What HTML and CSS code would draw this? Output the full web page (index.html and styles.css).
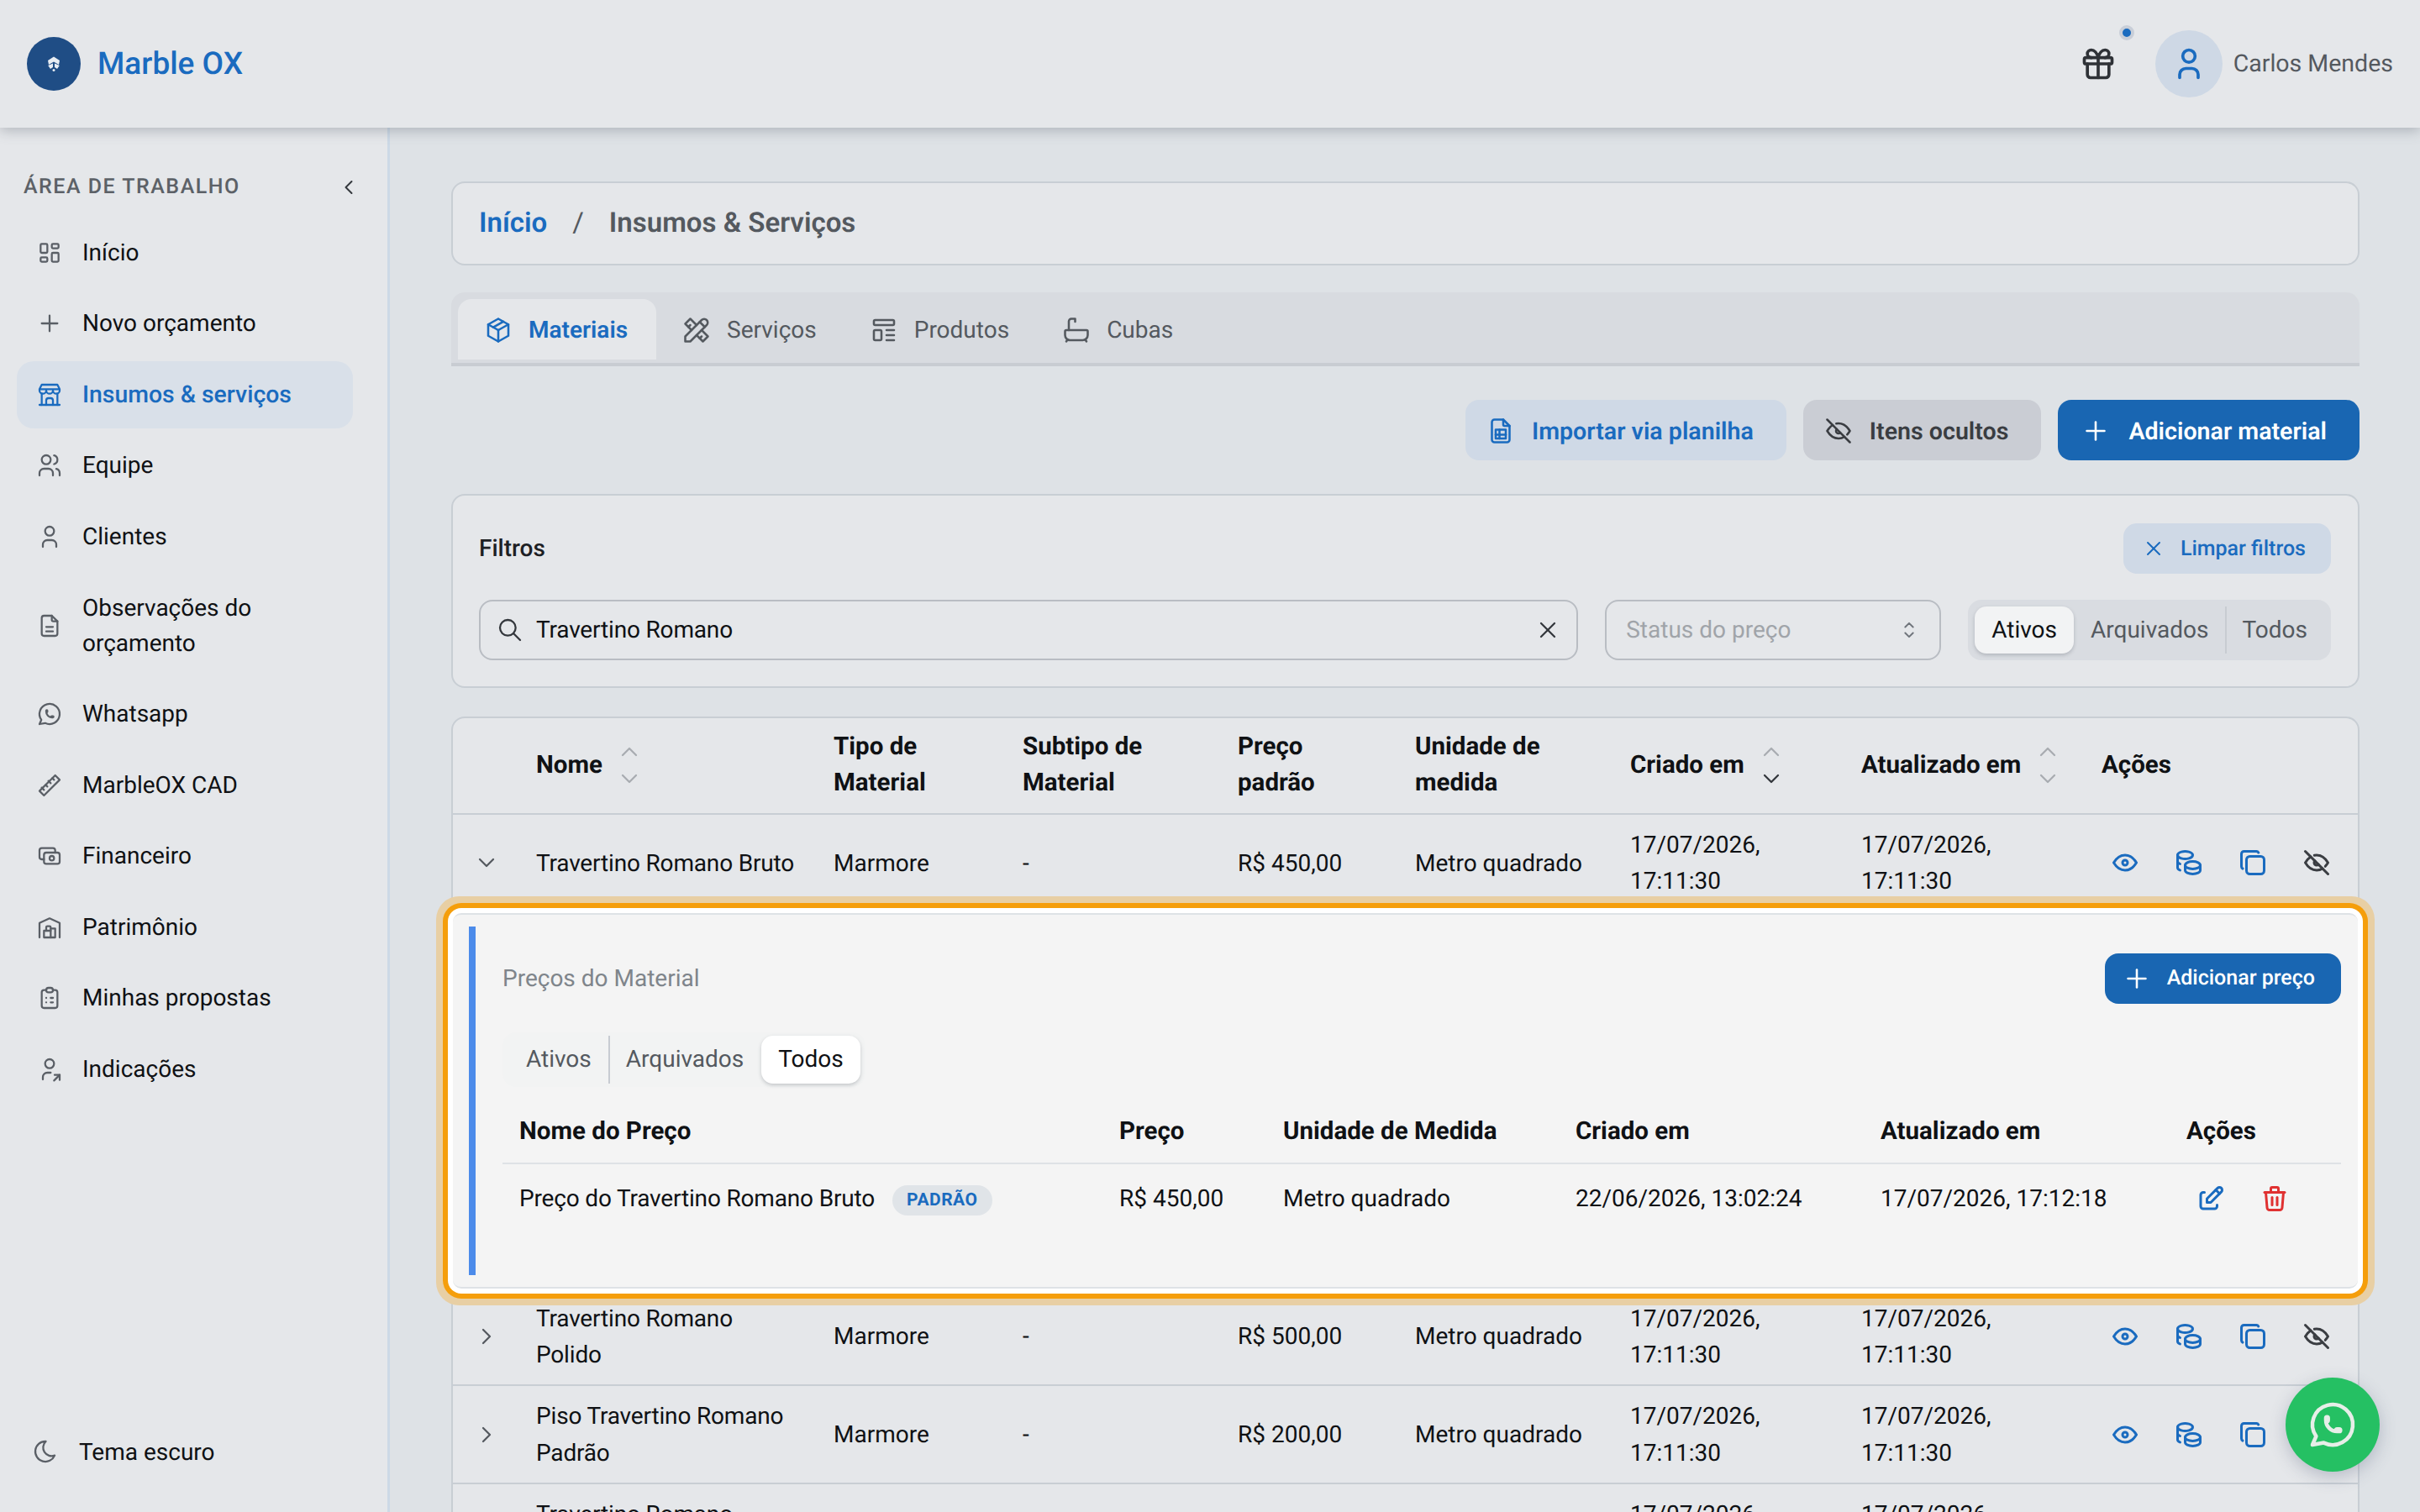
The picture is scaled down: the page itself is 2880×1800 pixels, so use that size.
FILE: index.html
```html
<!DOCTYPE html>
<html lang="pt-BR">
<head>
  <meta charset="UTF-8">
  <title>Marble OX - Insumos &amp; Serviços</title>
  <link rel="stylesheet" href="styles.css">
</head>
<body>

  <!-- Icon sprite -->
  <svg class="sprite" xmlns="http://www.w3.org/2000/svg">
    <symbol id="i-dashboard" viewBox="0 0 24 24"><path d="M5 4h4a1 1 0 0 1 1 1v6a1 1 0 0 1 -1 1h-4a1 1 0 0 1 -1 -1v-6a1 1 0 0 1 1 -1"/><path d="M5 16h4a1 1 0 0 1 1 1v2a1 1 0 0 1 -1 1h-4a1 1 0 0 1 -1 -1v-2a1 1 0 0 1 1 -1"/><path d="M15 12h4a1 1 0 0 1 1 1v6a1 1 0 0 1 -1 1h-4a1 1 0 0 1 -1 -1v-6a1 1 0 0 1 1 -1"/><path d="M15 4h4a1 1 0 0 1 1 1v2a1 1 0 0 1 -1 1h-4a1 1 0 0 1 -1 -1v-2a1 1 0 0 1 1 -1"/></symbol>
    <symbol id="i-plus" viewBox="0 0 24 24"><path d="M12 5v14"/><path d="M5 12h14"/></symbol>
    <symbol id="i-store" viewBox="0 0 24 24"><path d="M3 21l18 0"/><path d="M3 7v1a3 3 0 0 0 6 0v-1m0 1a3 3 0 0 0 6 0v-1m0 1a3 3 0 0 0 6 0v-1h-18l2 -4h14l2 4"/><path d="M5 21l0 -10.15"/><path d="M19 21l0 -10.15"/><path d="M9 21v-4a2 2 0 0 1 2 -2h2a2 2 0 0 1 2 2v4"/></symbol>
    <symbol id="i-users" viewBox="0 0 24 24"><path d="M5 7a4 4 0 1 0 8 0a4 4 0 1 0 -8 0"/><path d="M3 21v-2a4 4 0 0 1 4 -4h4a4 4 0 0 1 4 4v2"/><path d="M16 3.13a4 4 0 0 1 0 7.75"/><path d="M21 21v-2a4 4 0 0 0 -3 -3.85"/></symbol>
    <symbol id="i-user" viewBox="0 0 24 24"><path d="M8 7a4 4 0 1 0 8 0a4 4 0 0 0 -8 0"/><path d="M6 21v-2a4 4 0 0 1 4 -4h4a4 4 0 0 1 4 4v2"/></symbol>
    <symbol id="i-file" viewBox="0 0 24 24"><path d="M14 3v4a1 1 0 0 0 1 1h4"/><path d="M17 21h-10a2 2 0 0 1 -2 -2v-14a2 2 0 0 1 2 -2h7l5 5v11a2 2 0 0 1 -2 2z"/><path d="M9 17h6"/><path d="M9 13h6"/></symbol>
    <symbol id="i-whatsapp" viewBox="0 0 24 24"><path d="M3 21l1.65 -3.8a9 9 0 1 1 3.4 2.9l-5.05 .9"/><path d="M9 10a.5 .5 0 0 0 1 0v-1a.5 .5 0 0 0 -1 0v1a5 5 0 0 0 5 5h1a.5 .5 0 0 0 0 -1h-1a.5 .5 0 0 0 0 1"/></symbol>
    <symbol id="i-ruler" viewBox="0 0 24 24"><path d="M17 3l4 4l-14 14l-4 -4z"/><path d="M16 7l-1.5 -1.5"/><path d="M13 10l-2 -2"/><path d="M10 13l-1.5 -1.5"/><path d="M7 16l-2 -2"/></symbol>
    <symbol id="i-cash" viewBox="0 0 24 24"><path d="M7 11a2 2 0 0 1 2 -2h10a2 2 0 0 1 2 2v6a2 2 0 0 1 -2 2h-10a2 2 0 0 1 -2 -2z"/><path d="M12 14a2 2 0 1 0 4 0a2 2 0 0 0 -4 0"/><path d="M17 9v-2a2 2 0 0 0 -2 -2h-10a2 2 0 0 0 -2 2v6a2 2 0 0 0 2 2h2"/></symbol>
    <symbol id="i-warehouse" viewBox="0 0 24 24"><path d="M3 21v-13l9 -4l9 4v13"/><path d="M13 13h4v8h-10v-6h6"/><path d="M13 21v-9a1 1 0 0 0 -1 -1h-2a1 1 0 0 0 -1 1v3"/></symbol>
    <symbol id="i-clipboard" viewBox="0 0 24 24"><path d="M9 5h-2a2 2 0 0 0 -2 2v12a2 2 0 0 0 2 2h10a2 2 0 0 0 2 -2v-12a2 2 0 0 0 -2 -2h-2"/><path d="M9 5a2 2 0 0 1 2 -2h2a2 2 0 0 1 2 2v0a2 2 0 0 1 -2 2h-2a2 2 0 0 1 -2 -2z"/><path d="M9 12l.01 0"/><path d="M13 12l2 0"/><path d="M9 16l.01 0"/><path d="M13 16l2 0"/></symbol>
    <symbol id="i-user-share" viewBox="0 0 24 24"><path d="M8 7a4 4 0 1 0 8 0a4 4 0 0 0 -8 0"/><path d="M6 21v-2a4 4 0 0 1 4 -4h3"/><path d="M16 22l5 -5"/><path d="M21 21.5v-4.5h-4.5"/></symbol>
    <symbol id="i-moon" viewBox="0 0 24 24"><path d="M12 3c.132 0 .263 0 .393 0a7.5 7.5 0 0 0 7.92 12.446a9 9 0 1 1 -8.313 -12.454z"/></symbol>
    <symbol id="i-left" viewBox="0 0 24 24"><path d="M15 6l-6 6l6 6"/></symbol>
    <symbol id="i-right" viewBox="0 0 24 24"><path d="M9 6l6 6l-6 6"/></symbol>
    <symbol id="i-down" viewBox="0 0 24 24"><path d="M6 9l6 6l6 -6"/></symbol>
    <symbol id="i-up" viewBox="0 0 24 24"><path d="M6 15l6 -6l6 6"/></symbol>
    <symbol id="i-gift" viewBox="0 0 24 24"><path d="M3 9a1 1 0 0 1 1 -1h16a1 1 0 0 1 1 1v2a1 1 0 0 1 -1 1h-16a1 1 0 0 1 -1 -1z"/><path d="M12 8l0 13"/><path d="M19 12v7a2 2 0 0 1 -2 2h-10a2 2 0 0 1 -2 -2v-7"/><path d="M7.5 8a2.5 2.5 0 0 1 0 -5a4.8 8 0 0 1 4.5 5a4.8 8 0 0 1 4.5 -5a2.5 2.5 0 0 1 0 5"/></symbol>
    <symbol id="i-package" viewBox="0 0 24 24"><path d="M12 3l8 4.5l0 9l-8 4.5l-8 -4.5l0 -9l8 -4.5"/><path d="M12 12l8 -4.5"/><path d="M12 12l0 9"/><path d="M12 12l-8 -4.5"/><path d="M16 5.25l-8 4.5"/></symbol>
    <symbol id="i-tools" viewBox="0 0 24 24"><path d="M3 21h4l13 -13a1.5 1.5 0 0 0 -4 -4l-13 13v4"/><path d="M14.5 5.5l4 4"/><path d="M12 8l-5 -5l-4 4l5 5"/><path d="M7 8l-1.5 1.5"/><path d="M16 12l5 5l-4 4l-5 -5"/><path d="M16 17l-1.5 1.5"/></symbol>
    <symbol id="i-template" viewBox="0 0 24 24"><path d="M4 5a1 1 0 0 1 1 -1h14a1 1 0 0 1 1 1v2a1 1 0 0 1 -1 1h-14a1 1 0 0 1 -1 -1z"/><path d="M4 13a1 1 0 0 1 1 -1h4a1 1 0 0 1 1 1v6a1 1 0 0 1 -1 1h-4a1 1 0 0 1 -1 -1z"/><path d="M14 12l6 0"/><path d="M14 16l6 0"/><path d="M14 20l6 0"/></symbol>
    <symbol id="i-bath" viewBox="0 0 24 24"><path d="M4 12h16a1 1 0 0 1 1 1v3a4 4 0 0 1 -4 4h-10a4 4 0 0 1 -4 -4v-3a1 1 0 0 1 1 -1z"/><path d="M6 12v-7a2 2 0 0 1 2 -2h3v2.25"/><path d="M4 21l1 -1.5"/><path d="M20 21l-1 -1.5"/></symbol>
    <symbol id="i-sheet" viewBox="0 0 24 24"><path d="M14 3v4a1 1 0 0 0 1 1h4"/><path d="M17 21h-10a2 2 0 0 1 -2 -2v-14a2 2 0 0 1 2 -2h7l5 5v11a2 2 0 0 1 -2 2z"/><path d="M8 11h8v7h-8z"/><path d="M8 15h8"/><path d="M11 11v7"/></symbol>
    <symbol id="i-eye-off" viewBox="0 0 24 24"><path d="M10.585 10.587a2 2 0 0 0 2.829 2.828"/><path d="M16.681 16.673a8.717 8.717 0 0 1 -4.681 1.327c-3.6 0 -6.6 -2 -9 -6c1.272 -2.12 2.712 -3.678 4.32 -4.674m2.86 -1.146a9.055 9.055 0 0 1 1.82 -.18c3.6 0 6.6 2 9 6c-.666 1.11 -1.379 2.067 -2.138 2.87"/><path d="M3 3l18 18"/></symbol>
    <symbol id="i-eye" viewBox="0 0 24 24"><path d="M10 12a2 2 0 1 0 4 0a2 2 0 0 0 -4 0"/><path d="M21 12c-2.4 4 -5.4 6 -9 6c-3.6 0 -6.6 -2 -9 -6c2.4 -4 5.4 -6 9 -6c3.6 0 6.6 2 9 6"/></symbol>
    <symbol id="i-coins" viewBox="0 0 24 24"><path d="M9 14c0 1.657 2.686 3 6 3s6 -1.343 6 -3s-2.686 -3 -6 -3s-6 1.343 -6 3z"/><path d="M9 14v4c0 1.656 2.686 3 6 3s6 -1.344 6 -3v-4"/><path d="M3 6c0 1.072 1.144 2.062 3 2.598s4.144 .536 6 0c1.856 -.536 3 -1.526 3 -2.598c0 -1.072 -1.144 -2.062 -3 -2.598s-4.144 -.536 -6 0c-1.856 .536 -3 1.526 -3 2.598z"/><path d="M3 6v10c0 .888 .772 1.45 2 2"/><path d="M3 11c0 .888 .772 1.45 2 2"/></symbol>
    <symbol id="i-copy" viewBox="0 0 24 24"><path d="M7 9.667a2.667 2.667 0 0 1 2.667 -2.667h8.666a2.667 2.667 0 0 1 2.667 2.667v8.666a2.667 2.667 0 0 1 -2.667 2.667h-8.666a2.667 2.667 0 0 1 -2.667 -2.667z"/><path d="M4.012 16.737a2.005 2.005 0 0 1 -1.012 -1.737v-10c0 -1.1 .9 -2 2 -2h10c.75 0 1.158 .385 1.5 1"/></symbol>
    <symbol id="i-edit" viewBox="0 0 24 24"><path d="M7 7h-1a2 2 0 0 0 -2 2v9a2 2 0 0 0 2 2h9a2 2 0 0 0 2 -2v-1"/><path d="M20.385 6.585a2.1 2.1 0 0 0 -2.97 -2.97l-8.415 8.385v3h3l8.385 -8.415z"/><path d="M16 5l3 3"/></symbol>
    <symbol id="i-trash" viewBox="0 0 24 24"><path d="M4 7l16 0"/><path d="M10 11l0 6"/><path d="M14 11l0 6"/><path d="M5 7l1 12a2 2 0 0 0 2 2h8a2 2 0 0 0 2 -2l1 -12"/><path d="M9 7v-3a1 1 0 0 1 1 -1h4a1 1 0 0 1 1 1v3"/></symbol>
    <symbol id="i-search" viewBox="0 0 24 24"><path d="M3 10a7 7 0 1 0 14 0a7 7 0 1 0 -14 0"/><path d="M21 21l-6 -6"/></symbol>
    <symbol id="i-x" viewBox="0 0 24 24"><path d="M18 6l-12 12"/><path d="M6 6l12 12"/></symbol>
    <symbol id="i-selector" viewBox="0 0 24 24"><path d="M8 9l4 -4l4 4"/><path d="M16 15l-4 4l-4 -4"/></symbol>
  </svg>

  <header class="topbar">
    <div class="brand">
      <span class="brand-logo">
        <svg viewBox="0 0 20 20" width="20" height="20"><path d="M10 1.5l7 4.5-1 5-6-3.5-6 3.5-1-5z" fill="#e8edf3"/><path d="M3.2 12l5.8-2.6v4.6l-3 2zM16.8 12l-5.8-2.6v4.6l3 2z" fill="#e8edf3"/><circle cx="10" cy="17.6" r="1.5" fill="#e8edf3"/></svg>
      </span>
      <span class="brand-name">Marble OX</span>
    </div>
    <div class="topbar-right">
      <span class="gift">
        <svg class="icon icon-44"><use href="#i-gift"/></svg>
        <span class="gift-dot"></span>
      </span>
      <span class="avatar"><svg class="icon icon-44"><use href="#i-user"/></svg></span>
      <span class="user-name">Carlos Mendes</span>
    </div>
  </header>

  <div class="app">
    <aside class="sidebar">
      <div class="side-title">
        <span>ÁREA DE TRABALHO</span>
        <svg class="icon icon-28"><use href="#i-left"/></svg>
      </div>
      <nav class="side-nav">
        <a class="side-item"><svg class="icon"><use href="#i-dashboard"/></svg><span>Início</span></a>
        <a class="side-item"><svg class="icon"><use href="#i-plus"/></svg><span>Novo orçamento</span></a>
        <a class="side-item active"><svg class="icon"><use href="#i-store"/></svg><span>Insumos &amp; serviços</span></a>
        <a class="side-item"><svg class="icon"><use href="#i-users"/></svg><span>Equipe</span></a>
        <a class="side-item"><svg class="icon"><use href="#i-user"/></svg><span>Clientes</span></a>
        <a class="side-item"><svg class="icon"><use href="#i-file"/></svg><span>Observações do orçamento</span></a>
        <a class="side-item"><svg class="icon"><use href="#i-whatsapp"/></svg><span>Whatsapp</span></a>
        <a class="side-item"><svg class="icon"><use href="#i-ruler"/></svg><span>MarbleOX CAD</span></a>
        <a class="side-item"><svg class="icon"><use href="#i-cash"/></svg><span>Financeiro</span></a>
        <a class="side-item"><svg class="icon"><use href="#i-warehouse"/></svg><span>Patrimônio</span></a>
        <a class="side-item"><svg class="icon"><use href="#i-clipboard"/></svg><span>Minhas propostas</span></a>
        <a class="side-item"><svg class="icon"><use href="#i-user-share"/></svg><span>Indicações</span></a>
      </nav>
      <a class="side-theme"><svg class="icon"><use href="#i-moon"/></svg><span>Tema escuro</span></a>
    </aside>

    <main class="content">
      <div class="breadcrumb">
        <a class="crumb-link">Início</a>
        <span class="crumb-sep">/</span>
        <span class="crumb-current">Insumos &amp; Serviços</span>
      </div>

      <div class="tabs">
        <a class="tab active"><svg class="icon icon-36"><use href="#i-package"/></svg>Materiais</a>
        <a class="tab"><svg class="icon icon-36"><use href="#i-tools"/></svg>Serviços</a>
        <a class="tab"><svg class="icon icon-36"><use href="#i-template"/></svg>Produtos</a>
        <a class="tab"><svg class="icon icon-36"><use href="#i-bath"/></svg>Cubas</a>
      </div>

      <div class="toolbar">
        <button class="btn btn-light"><svg class="icon icon-36"><use href="#i-sheet"/></svg>Importar via planilha</button>
        <button class="btn btn-gray"><svg class="icon icon-36"><use href="#i-eye-off"/></svg>Itens ocultos</button>
        <button class="btn btn-primary"><svg class="icon icon-36"><use href="#i-plus"/></svg>Adicionar material</button>
      </div>

      <section class="filters">
        <div class="filters-head">
          <span>Filtros</span>
          <button class="btn btn-light btn-sm"><svg class="icon icon-28"><use href="#i-x"/></svg>Limpar filtros</button>
        </div>
        <div class="filters-row">
          <div class="field field-search">
            <svg class="icon icon-32 field-search-icon"><use href="#i-search"/></svg>
            <span class="field-value">Travertino Romano</span>
            <svg class="icon icon-32"><use href="#i-x"/></svg>
          </div>
          <div class="field field-select">
            <span class="field-placeholder">Status do preço</span>
            <svg class="icon icon-28"><use href="#i-selector"/></svg>
          </div>
          <div class="segment">
            <span class="seg-item active">Ativos</span>
            <span class="seg-item">Arquivados</span>
            <span class="seg-item seg-split">Todos</span>
          </div>
        </div>
      </section>

      <section class="table-card">
        <table class="materials">
          <colgroup>
            <col class="c-toggle"><col class="c-name"><col class="c-type"><col class="c-sub"><col class="c-price">
            <col class="c-unit"><col class="c-created"><col class="c-updated"><col class="c-actions">
          </colgroup>
          <thead>
            <tr>
              <th></th>
              <th><span class="th-sort">Nome<span class="sort"><svg class="icon icon-32"><use href="#i-up"/></svg><svg class="icon icon-32"><use href="#i-down"/></svg></span></span></th>
              <th>Tipo de Material</th>
              <th>Subtipo de Material</th>
              <th>Preço padrão</th>
              <th>Unidade de medida</th>
              <th><span class="th-sort">Criado em<span class="sort"><svg class="icon icon-32"><use href="#i-up"/></svg><svg class="icon icon-32 on"><use href="#i-down"/></svg></span></span></th>
              <th><span class="th-sort">Atualizado em<span class="sort"><svg class="icon icon-32"><use href="#i-up"/></svg><svg class="icon icon-32"><use href="#i-down"/></svg></span></span></th>
              <th>Ações</th>
            </tr>
          </thead>
          <tbody>
            <tr>
              <td class="toggle"><svg class="icon icon-32"><use href="#i-down"/></svg></td>
              <td class="name">Travertino Romano Bruto</td>
              <td>Marmore</td>
              <td>-</td>
              <td>R$ 450,00</td>
              <td>Metro quadrado</td>
              <td>17/07/2026, 17:11:30</td>
              <td>17/07/2026, 17:11:30</td>
              <td>
                <div class="row-actions">
                  <a class="act"><svg class="icon icon-36"><use href="#i-eye"/></svg></a>
                  <a class="act"><svg class="icon icon-36"><use href="#i-coins"/></svg></a>
                  <a class="act"><svg class="icon icon-36"><use href="#i-copy"/></svg></a>
                  <a class="act act-dark"><svg class="icon icon-36"><use href="#i-eye-off"/></svg></a>
                </div>
              </td>
            </tr>
            <tr class="row-open">
              <td colspan="9">
                <div class="prices">
                  <div class="prices-inner">
                    <div class="prices-head">
                      <span class="prices-title">Preços do Material</span>
                      <button class="btn btn-primary btn-sm"><svg class="icon icon-36"><use href="#i-plus"/></svg>Adicionar preço</button>
                    </div>
                    <div class="segment segment-plain">
                      <span class="seg-item">Ativos</span>
                      <span class="seg-item seg-split">Arquivados</span>
                      <span class="seg-item active">Todos</span>
                    </div>
                    <table class="price-table">
                      <colgroup>
                        <col class="p-name"><col class="p-price"><col class="p-unit"><col class="p-created"><col class="p-updated"><col class="p-actions">
                      </colgroup>
                      <thead>
                        <tr>
                          <th>Nome do Preço</th><th>Preço</th><th>Unidade de Medida</th><th>Criado em</th><th>Atualizado em</th><th>Ações</th>
                        </tr>
                      </thead>
                      <tbody>
                        <tr>
                          <td class="name">Preço do Travertino Romano Bruto<span class="badge">PADRÃO</span></td>
                          <td>R$ 450,00</td>
                          <td>Metro quadrado</td>
                          <td>22/06/2026, 13:02:24</td>
                          <td>17/07/2026, 17:12:18</td>
                          <td>
                            <div class="row-actions">
                              <a class="act"><svg class="icon icon-36"><use href="#i-edit"/></svg></a>
                              <a class="act act-red"><svg class="icon icon-36"><use href="#i-trash"/></svg></a>
                            </div>
                          </td>
                        </tr>
                      </tbody>
                    </table>
                  </div>
                </div>
              </td>
            </tr>
            <tr>
              <td class="toggle"><svg class="icon icon-32"><use href="#i-right"/></svg></td>
              <td class="name">Travertino Romano Polido</td>
              <td>Marmore</td>
              <td>-</td>
              <td>R$ 500,00</td>
              <td>Metro quadrado</td>
              <td>17/07/2026, 17:11:30</td>
              <td>17/07/2026, 17:11:30</td>
              <td>
                <div class="row-actions">
                  <a class="act"><svg class="icon icon-36"><use href="#i-eye"/></svg></a>
                  <a class="act"><svg class="icon icon-36"><use href="#i-coins"/></svg></a>
                  <a class="act"><svg class="icon icon-36"><use href="#i-copy"/></svg></a>
                  <a class="act act-dark"><svg class="icon icon-36"><use href="#i-eye-off"/></svg></a>
                </div>
              </td>
            </tr>
            <tr>
              <td class="toggle"><svg class="icon icon-32"><use href="#i-right"/></svg></td>
              <td class="name">Piso Travertino Romano Padrão</td>
              <td>Marmore</td>
              <td>-</td>
              <td>R$ 200,00</td>
              <td>Metro quadrado</td>
              <td>17/07/2026, 17:11:30</td>
              <td>17/07/2026, 17:11:30</td>
              <td>
                <div class="row-actions">
                  <a class="act"><svg class="icon icon-36"><use href="#i-eye"/></svg></a>
                  <a class="act"><svg class="icon icon-36"><use href="#i-coins"/></svg></a>
                  <a class="act"><svg class="icon icon-36"><use href="#i-copy"/></svg></a>
                  <a class="act act-dark"><svg class="icon icon-36"><use href="#i-eye-off"/></svg></a>
                </div>
              </td>
            </tr>
            <tr>
              <td class="toggle"><svg class="icon icon-32"><use href="#i-right"/></svg></td>
              <td class="name">Travertino Romano Escovado</td>
              <td>Marmore</td>
              <td>-</td>
              <td>R$ 300,00</td>
              <td>Metro quadrado</td>
              <td>17/07/2026, 17:11:30</td>
              <td>17/07/2026, 17:11:30</td>
              <td></td>
            </tr>
          </tbody>
        </table>
      </section>
    </main>
  </div>

  <a class="whats-fab"><svg class="icon icon-64"><use href="#i-whatsapp"/></svg></a>

</body>
</html>
```

FILE: styles.css
```css
* {
  box-sizing: border-box;
}
html, body {
  margin: 0;
  height: 100%;
  overflow: hidden;
}
body {
  font-family: Roboto, "Liberation Sans", sans-serif;
  font-size: 28px;
  line-height: 1.55;
  color: #0f1114;
  background: #dee2e6;
  display: flex;
  flex-direction: column;
  text-rendering: geometricPrecision;
}
.sprite {
  display: none;
}
.icon {
  width: 32px;
  height: 32px;
  flex: none;
  fill: none;
  stroke: currentColor;
  stroke-width: 1.7;
  stroke-linecap: round;
  stroke-linejoin: round;
}
.icon-28 { width: 28px; height: 28px; }
.icon-32 { width: 32px; height: 32px; }
.icon-36 { width: 36px; height: 36px; }
.icon-44 { width: 44px; height: 44px; stroke-width: 2; }
.icon-64 { width: 64px; height: 64px; }

/* top bar */
.topbar {
  height: 152px;
  flex: none;
  display: flex;
  align-items: center;
  justify-content: space-between;
  padding: 0 32px;
  background: #e5e7ea;
  box-shadow: 0 4px 14px rgba(90, 96, 110, 0.35);
  position: relative;
  z-index: 5;
}
.brand {
  display: flex;
  align-items: center;
  gap: 20px;
}
.brand-logo {
  width: 64px;
  height: 64px;
  border-radius: 50%;
  background: #1f4d85;
  display: flex;
  align-items: center;
  justify-content: center;
}
.brand-name {
  font-size: 37px;
  font-weight: 500;
  color: #1a6bbf;
  padding-top: 2px;
}
.topbar-right {
  display: flex;
  align-items: center;
}
.gift {
  position: relative;
  display: flex;
  color: #2f3237;
  margin-right: 46px;
}
.gift-dot {
  position: absolute;
  top: -24px;
  right: -21px;
  width: 18px;
  height: 18px;
  border-radius: 50%;
  background: #1a6bbf;
  border: 4px solid #c8ced8;
}
.avatar {
  width: 80px;
  height: 80px;
  border-radius: 50%;
  background: #ced8e5;
  color: #1a6bbf;
  display: flex;
  align-items: center;
  justify-content: center;
  margin-right: 13px;
}
.user-name {
  color: #54595f;
  font-size: 28.5px;
}

/* sidebar */
.app {
  flex: 1;
  display: flex;
  min-height: 0;
}
.sidebar {
  width: 464px;
  flex: none;
  background: #e5e7ea;
  border-right: 3px solid #ccd9e6;
  padding: 46px 20px 50px;
  display: flex;
  flex-direction: column;
}
.side-title {
  display: flex;
  align-items: center;
  justify-content: space-between;
  padding: 0 12px 0 8px;
  height: 50px;
  margin-bottom: 13px;
  color: #5c6167;
  font-size: 25px;
  font-weight: 500;
  letter-spacing: 1.5px;
}
.side-title .icon {
  color: #33373c;
  width: 28px;
}
.side-nav {
  display: flex;
  flex-direction: column;
  gap: 5.2px;
  width: 400px;
}
.side-item {
  display: flex;
  align-items: center;
  gap: 23px;
  padding: 18.7px 23px;
  line-height: 42px;
  border-radius: 20px;
}
.side-item .icon {
  color: #5a5f66;
}
.side-item.active {
  background: #d9e0e9;
  color: #1a6bbf;
  font-weight: 500;
  font-size: 28.4px;
}
.side-item.active .icon {
  color: #1a6bbf;
}
.side-theme {
  margin-top: auto;
  display: flex;
  align-items: center;
  gap: 24px;
  padding-left: 18px;
}
.side-theme .icon {
  color: #5a5f66;
}

/* main column */
.content {
  flex: 1;
  min-width: 0;
  padding: 64px 72px 0 73px;
  overflow: hidden;
}
.breadcrumb {
  height: 100px;
  display: flex;
  align-items: center;
  padding: 0 31px;
  background: #e5e7ea;
  border: 2px solid #c8ced4;
  border-radius: 16px;
  font-size: 33px;
  font-weight: 600;
}
.crumb-link {
  color: #1a6bbf;
}
.crumb-sep {
  margin: 0 30px;
  color: #54595f;
  font-weight: 400;
}
.crumb-current {
  color: #54595f;
}

.tabs {
  margin-top: 32px;
  height: 88px;
  display: flex;
  align-items: flex-start;
  padding: 8px 8px 0;
  background: #d8dbe0;
  border-bottom: 4px solid #c8ccd2;
  border-radius: 16px 16px 0 0;
}
.tab {
  height: 72px;
  display: flex;
  align-items: center;
  gap: 18px;
  padding: 1px 32px 0 30px;
  border-radius: 16px 16px 0 0;
  color: #54595f;
}
.tab.active {
  background: #e5e7ea;
  color: #1a6bbf;
  font-weight: 600;
  padding-right: 34px;
}

.toolbar {
  margin-top: 40px;
  display: flex;
  justify-content: flex-end;
  gap: 20px;
}
.btn {
  font-family: inherit;
  font-size: 28.6px;
  font-weight: 600;
  line-height: 1;
  height: 72px;
  display: flex;
  align-items: center;
  gap: 19px;
  padding: 2px 39px 0 24px;
  border: none;
  border-radius: 16px;
  text-rendering: geometricPrecision;
}
.btn-light {
  background: #cfd9e6;
  color: #1a6bbf;
}
.btn-gray {
  background: #cacdd4;
  color: #3a3d42;
}
.btn-primary {
  background: #1966b2;
  color: #fff;
}
.toolbar .btn-primary {
  padding-left: 27px;
  gap: 21px;
}
.btn-sm {
  font-size: 25px;
  font-weight: 500;
  height: 60px;
  gap: 18px;
  padding: 0 30px 0 22px;
}

.filters {
  margin-top: 40px;
  height: 231px;
  padding: 32px 32px 32px 31px;
  background: #e5e7ea;
  border: 2px solid #c8ced4;
  border-radius: 16px;
}
.filters-head {
  display: flex;
  align-items: center;
  justify-content: space-between;
  font-weight: 500;
  color: #1d2024;
  padding-top: 1px;
}
.filters-row {
  margin-top: 31px;
  display: flex;
  gap: 32px;
}
.field {
  height: 72px;
  display: flex;
  align-items: center;
  border: 2px solid #b9bdc3;
  border-radius: 16px;
}
.field-search {
  flex: 1;
  padding: 0 18px 0 19px;
  gap: 15px;
}
.field-search .icon {
  color: #33373c;
}
.field-value {
  flex: 1;
  letter-spacing: -0.17px;
}
.field-select {
  width: 400px;
  flex: none;
  padding: 0 22px 0 23px;
  justify-content: space-between;
}
.field-select .icon {
  color: #70757c;
}
.field-placeholder {
  color: #a0a4a9;
}
.segment {
  height: 72px;
  display: flex;
  align-items: center;
  padding: 8px;
  border-radius: 16px;
  background: #d9dce1;
  color: #54595f;
}
.seg-item {
  height: 100%;
  display: flex;
  align-items: center;
  padding: 0 20px;
  border-radius: 14px;
}
.seg-item.active {
  background: #f2f3f4;
  color: #0f1114;
  box-shadow: 0 2px 4px rgba(60, 66, 80, 0.25);
}
.seg-split {
  border-left: 2px solid #c8ccd2;
  border-radius: 0;
  padding-left: 18px;
}

/* materials table */
.table-card {
  margin-top: 34px;
  background: #e5e7ea;
  border: 2px solid #c8ced4;
  border-radius: 16px 16px 0 0;
  height: 1100px;
}
.materials {
  width: 100%;
  table-layout: fixed;
  border-collapse: collapse;
}
.c-toggle { width: 79px; }
.c-name { width: 354px; }
.c-type { width: 225px; }
.c-sub { width: 256px; }
.c-price { width: 211px; }
.c-unit { width: 256px; }
.c-created { width: 275px; }
.c-updated { width: 286px; }
.materials > thead th {
  text-align: left;
  font-size: 29.5px;
  font-weight: 700;
  line-height: 43.4px;
  padding: 13px 20px;
  border-bottom: 2px solid #c8ced4;
  vertical-align: middle;
}
.materials > tbody > tr > td {
  padding: 14px 20px;
  border-bottom: 2px solid #c8ced4;
  vertical-align: middle;
}
.name {
  letter-spacing: -0.17px;
}
.th-sort {
  display: flex;
  align-items: center;
  gap: 16px;
}
.sort {
  display: flex;
  flex-direction: column;
  color: #a8acb1;
}
.sort .on {
  color: #33373c;
}
.materials .toggle {
  padding: 0 0 0 24px;
  color: #54595f;
}
.toggle .icon {
  display: block;
}
.row-actions {
  display: flex;
  gap: 20px;
}
.act {
  width: 56px;
  height: 56px;
  display: flex;
  align-items: center;
  justify-content: center;
  color: #1a6bbf;
}
.act .icon {
  stroke-width: 2;
}
.act-dark {
  color: #3a3d42;
}
.act-red {
  color: #e03131;
}

/* expanded row with the highlighted prices */
.materials > tbody > tr.row-open > td {
  padding: 0;
  border-bottom: none;
}
.prices {
  position: relative;
  z-index: 2;
  height: 447px;
  padding: 14px 0 14px 19px;
  background: #f4f4f4;
  border-top: 2px solid #dee2e6;
  border-bottom: 2px solid #dee2e6;
  border-radius: 10px;
  box-shadow: 0 0 0 6px #fff, 0 0 0 12px #f59e0b, 0 0 0 20px #e8cfa4;
}
.prices-inner {
  height: 100%;
  border-left: 8px solid #4c8bea;
  padding: 32px 20px 0 32px;
}
.prices-head {
  display: flex;
  align-items: center;
  justify-content: space-between;
}
.prices-head .btn-sm {
  padding: 0 31px 0 20px;
}
.prices-title {
  color: #7f858b;
}
.segment-plain {
  margin-top: 34px;
  width: 432px;
  height: 65px;
  padding: 4px 8px;
  background: #f2f3f3;
}
.segment-plain .seg-split {
  padding-left: 19px;
  padding-right: 21px;
}
.segment-plain .seg-item.active {
  background: #fff;
}
.price-table {
  width: 100%;
  table-layout: fixed;
  border-collapse: collapse;
}
.p-name { width: 714px; }
.p-price { width: 195px; }
.p-unit { width: 348px; }
.p-created { width: 363px; }
.p-updated { width: 364px; }
.price-table th {
  text-align: left;
  font-size: 29.5px;
  font-weight: 700;
  line-height: 43.4px;
  padding: 32px 20px 15px;
  border-bottom: 2px solid #dee2e6;
}
.price-table td {
  padding: 13px 20px;
  vertical-align: middle;
}
.price-table .row-actions {
  margin-left: 1px;
}
.badge {
  display: inline-block;
  margin-left: 21px;
  padding: 0 17px;
  height: 36px;
  line-height: 36px;
  vertical-align: middle;
  border-radius: 18px;
  background: #e0e4e8;
  color: #1a6bbf;
  font-size: 21px;
  font-weight: 700;
  letter-spacing: 0.5px;
}

/* floating whatsapp button */
.whats-fab {
  position: fixed;
  right: 48px;
  bottom: 48px;
  width: 112px;
  height: 112px;
  border-radius: 50%;
  background: #25c063;
  color: #e7eee8;
  display: flex;
  align-items: center;
  justify-content: center;
  box-shadow: 0 6px 20px rgba(80, 90, 120, 0.3);
  z-index: 6;
}
```
